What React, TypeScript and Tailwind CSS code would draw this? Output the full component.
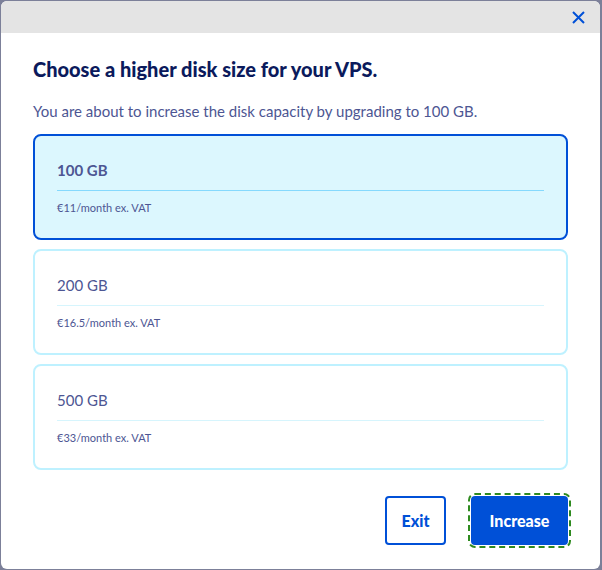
import React, { useState } from 'react';

const options = [
  { size: '100 GB', price: '€11/month ex. VAT' },
  { size: '200 GB', price: '€16.5/month ex. VAT' },
  { size: '500 GB', price: '€33/month ex. VAT' },
];

export default function App() {
  const [selected, setSelected] = useState(0);

  return (
    <div className="w-[602px] h-[570px] bg-[#7c8099] pt-px pl-px font-['Lato','Open_Sans',sans-serif]">
      <div className="w-[599px] h-[568px] bg-white rounded-[6px] overflow-hidden flex flex-col">
        {/* Header */}
        <div className="h-[32px] bg-[#e4e4e4] flex items-center justify-end pr-[15px]">
          <button className="text-[#0050d7]">
            <svg width="13" height="13" viewBox="0 0 13 13" fill="none">
              <path d="M1 1L12 12M12 1L1 12" stroke="currentColor" strokeWidth="2" />
            </svg>
          </button>
        </div>

        {/* Body */}
        <div className="px-[32px] pt-[24px] flex flex-col">
          <h2 className="text-[20px] leading-[24px] font-black text-[#0b1a5c]">
            Choose a higher disk size for your VPS.
          </h2>
          <p className="mt-[20px] text-[15px] leading-[20px] text-[#4d5693]">
            You are about to increase the disk capacity by upgrading to 100 GB.
          </p>

          <div className="mt-[13px] flex flex-col gap-[9px]">
            {options.map((o, i) => {
              const active = i === selected;
              return (
                <button
                  key={o.size}
                  onClick={() => setSelected(i)}
                  className={
                    active
                      ? 'h-[106px] flex flex-col justify-start text-left rounded-[8px] border-2 border-[#0050d7] bg-[#dcf7fe] px-[22px] pt-[24px]'
                      : 'h-[106px] flex flex-col justify-start text-left rounded-[8px] border-2 border-[#bef1ff] bg-white px-[22px] pt-[24px]'
                  }
                >
                  <div className={active ? 'text-[15px] leading-[20px] font-bold text-[#4d5693]' : 'text-[15px] leading-[20px] text-[#4d5693]'}>
                    {o.size}
                  </div>
                  <div className={active ? 'mt-[10px] h-px w-full bg-[#85d9fd]' : 'mt-[10px] h-px w-full bg-[#d6f5fd]'} />
                  <div className="mt-[9px] text-[11px] leading-[16px] text-[#4d5693]">{o.price}</div>
                </button>
              );
            })}
          </div>

          {/* Footer */}
          <div className="mt-[26px] flex justify-end gap-[25px]">
            <button className="w-[61px] h-[49px] rounded-[4px] border-2 border-[#0050d7] text-[#0050d7] font-black text-[16px]">
              Exit
            </button>
            <button className="w-[97px] h-[49px] rounded-[4px] bg-[#0050d7] text-white font-black text-[16px] outline-2 outline-dashed outline-[#2e8a1f] outline-offset-[1px]">
              Increase
            </button>
          </div>
        </div>
      </div>
    </div>
  );
}
